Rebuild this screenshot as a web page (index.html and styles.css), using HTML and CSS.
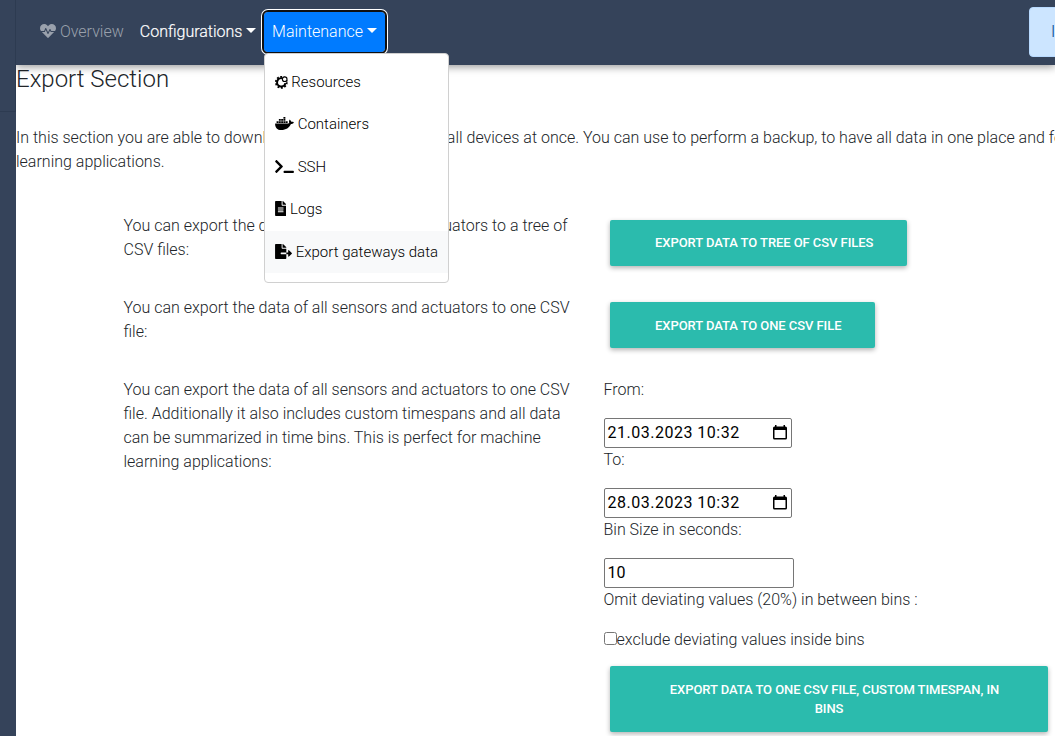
FILE: index.html
```html
<!DOCTYPE html>
<html lang="en">
<head>
<meta charset="utf-8">
<title>Export Section</title>
<link rel="stylesheet" href="styles.css">
</head>
<body>
<div class="app">
  <aside class="sidebar"><div class="sidebar-head"></div></aside>
  <div class="page">
    <nav class="navbar">
      <a class="nav-link muted"><svg class="icon" width="16" height="16" viewBox="0 0 512 512"><path d="M320.2 243.8l-49.7 99.4c-6 12.1-23.4 11.7-28.9-.6l-56.9-126.3-30 71.7H60.6l182.5 186.5c7.1 7.3 18.6 7.3 25.7 0L451.4 288H342.3l-22.1-44.2zM473.7 73.9l-2.4-2.5c-51.5-52.6-135.8-52.6-187.4 0L256 100l-27.9-28.5c-51.5-52.7-135.9-52.7-187.4 0l-2.4 2.4C-10.4 123.7-12.5 203 31 256h102.4l35.9-86.2c5.4-12.9 23.6-13.2 29.4-.4l58.2 129.3 49-97.9c5.9-11.8 22.7-11.8 28.6 0l27.6 55.2H481c43.5-53 41.4-132.3-7.3-182.1z"/></svg> Overview</a>
      <a class="nav-link caret">Configurations</a>
      <div class="dropdown">
        <a class="nav-link caret active">Maintenance</a>
        <div class="menu">
          <a class="item"><svg class="icon gear" width="13" height="14" viewBox="0 0 13 14"><circle class="gear-teeth" cx="6.3" cy="7.3" r="5.5"/><path class="gear-ring" d="M7 3.200a4.200 4.200 0 1 0 3.400 4.900"/><circle class="gear-gap" cx="9.600" cy="4.300" r="2.500"/><circle class="gear-small" cx="9.700" cy="4.200" r="2.300"/></svg> Resources</a>
          <a class="item"><svg class="icon" width="19" height="15" viewBox="0 0 640 512"><path d="M349.9 236.3h-66.1v-59.4h66.1v59.4zm0-204.3h-66.1v60.7h66.1V32zm78.2 144.8H362v59.4h66.1v-59.4zm-156.3-72.1h-66.1v60.1h66.1v-60.1zm78.1 0h-66.1v60.1h66.1v-60.1zm276.8 100c-14.4-9.7-47.6-13.2-73.1-8.4-3.3-24-16.7-44.9-41.1-63.7l-14-9.3-9.3 14c-18.4 27.8-23.4 73.6-3.7 103.8-8.7 4.7-25.8 11.1-48.4 10.7H2.4c-8.7 50.8 5.8 116.8 44 162.1 37.1 43.9 92.7 66.2 165.4 66.2 157.4 0 273.9-72.5 328.4-204.2 21.4.4 67.6.1 91.3-45.2 1.5-2.5 6.6-13.2 8.5-17.1l-13.3-8.9zm-511.1-27.9h-66v59.4h66.1v-59.4zm78.1 0h-66.1v59.4h66.1v-59.4zm78.1 0h-66.1v59.4h66.1v-59.4zm-78.1-72.1h-66.1v60.1h66.1v-60.1z"/></svg> Containers</a>
          <a class="item"><svg class="icon" width="19" height="15" viewBox="0 0 640 512"><path d="M257.981 272.971L63.638 467.314c-9.373 9.373-24.569 9.373-33.941 0L7.029 444.647c-9.357-9.357-9.375-24.522-.04-33.901L161.011 256 6.99 101.255c-9.335-9.379-9.317-24.544.04-33.901l22.667-22.667c9.373-9.373 24.569-9.373 33.941 0L257.981 239.03c9.373 9.372 9.373 24.568 0 33.941zM640 456v-32c0-13.255-10.745-24-24-24H312c-13.255 0-24 10.745-24 24v32c0 13.255 10.745 24 24 24h304c13.255 0 24-10.745 24-24z"/></svg> SSH</a>
          <a class="item"><svg class="icon" width="11.4" height="15" viewBox="0 0 384 512"><path d="M224 136V0H24C10.7 0 0 10.7 0 24v464c0 13.3 10.7 24 24 24h336c13.3 0 24-10.7 24-24V160H248c-13.2 0-24-10.8-24-24zm64 236c0 6.6-5.4 12-12 12H108c-6.6 0-12-5.4-12-12v-8c0-6.6 5.4-12 12-12h168c6.6 0 12 5.4 12 12v8zm0-64c0 6.6-5.4 12-12 12H108c-6.6 0-12-5.4-12-12v-8c0-6.6 5.4-12 12-12h168c6.6 0 12 5.4 12 12v8zm0-72v8c0 6.6-5.4 12-12 12H108c-6.6 0-12-5.4-12-12v-8c0-6.6 5.4-12 12-12h168c6.6 0 12 5.4 12 12zm96-114.1v6.1H256V0h6.1c6.4 0 12.5 2.5 17 7l97.9 98c4.5 4.5 7 10.6 7 16.9z"/></svg> Logs</a>
          <a class="item current"><svg class="icon" width="17" height="15" viewBox="0 0 576 512"><path d="M384 121.9c0-6.3-2.5-12.4-7-16.9L279.1 7c-4.5-4.5-10.6-7-17-7H256v128h128zM571 308l-95.7-96.4c-10.1-10.1-27.4-3-27.4 11.3V288h-64v64h64v65.2c0 14.3 17.3 21.4 27.4 11.3L571 332c6.6-6.6 6.6-17.4 0-24zm-379 28v-32c0-8.8 7.2-16 16-16h176V160H248c-13.2 0-24-10.8-24-24V0H24C10.7 0 0 10.7 0 24v464c0 13.3 10.7 24 24 24h336c13.3 0 24-10.7 24-24V352H208c-8.8 0-16-7.2-16-16z"/></svg> Export gateways data</a>
        </div>
      </div>
      <div class="alert">Info</div>
    </nav>
    <main class="content">
      <h1 class="title">Export Section</h1>
      <p class="intro">In this section you are able to download the gateways data of all devices at once. You can use to perform a backup, to have all data in one place and for machine<br>learning applications.</p>
      <section class="exports">
        <p class="desc">You can export the data of all sensors and actuators to a tree of CSV files:</p>
        <div class="action"><button class="btn tree">Export data to tree of CSV files</button></div>
        <p class="desc">You can export the data of all sensors and actuators to one CSV file:</p>
        <div class="action"><button class="btn">Export data to one CSV file</button></div>
        <p class="desc">You can export the data of all sensors and actuators to one CSV file. Additionally it also includes custom timespans and all data can be summarized in time bins. This is perfect for machine learning applications:</p>
        <form class="form">
          <p class="label">From:</p>
          <div class="field date"><span class="value">21.03.2023 10:32</span><svg class="calendar" width="14" height="15" viewBox="0 0 14 15"><path d="M2 0h1.5v1.5h7V0H12v1.5h.5Q14 1.5 14 3v10q0 1.500-1.500 1.500h-11Q0 14.500 0 13V3q0-1.500 1.500-1.500H2zM1.500 5v8h11V5z" fill-rule="evenodd"/></svg></div>
          <p class="label">To:</p>
          <div class="field date"><span class="value">28.03.2023 10:32</span><svg class="calendar" width="14" height="15" viewBox="0 0 14 15"><path d="M2 0h1.5v1.5h7V0H12v1.5h.5Q14 1.5 14 3v10q0 1.500-1.500 1.500h-11Q0 14.500 0 13V3q0-1.500 1.500-1.500H2zM1.500 5v8h11V5z" fill-rule="evenodd"/></svg></div>
          <p class="label">Bin Size in seconds:</p>
          <input class="field number" type="text" value="10">
          <p class="label">Omit deviating values (20%) in between bins :</p>
          <label class="check"><input class="box" type="checkbox">exclude deviating values inside bins</label>
          <button class="btn wide" type="button">Export data to one CSV file, custom timespan, in bins</button>
        </form>
      </section>
    </main>
  </div>
</div>
</body>
</html>
```
FILE: styles.css
```css
* { box-sizing: border-box; }
body { margin: 0; background: #fff; color: #212529; font: 300 16px/24px Roboto, sans-serif; overflow: hidden; }
p, h1 { margin: 0; }
.app { display: flex; width: 1055px; height: 736px; overflow: hidden; }
.sidebar { position: relative; z-index: 3; flex: 0 0 16px; background: #35435a; }
.sidebar-head { height: 112px; border-right: 1px solid #2d3b51; border-bottom: 1px solid #2d3b51; }
.page { flex: 1; min-width: 0; }
.navbar { position: relative; z-index: 2; display: flex; align-items: center; height: 65px; padding: 0 0 2px 16px; background: #35435a; box-shadow: 0 2px 8px rgba(0,0,0,.4); }
.nav-link { display: block; padding: 8px; color: #fff; white-space: nowrap; }
.nav-link.muted { color: #9aa1ac; }
.nav-link.caret { -webkit-text-stroke: .2px #fff; }
.nav-link.caret.active { padding-left: 7.6px; padding-right: 8.4px; -webkit-text-stroke: 0; }
.icon { fill: currentColor; vertical-align: -2px; }
.gear { margin-right: -.4px; }
.caret::after { content: ""; display: inline-block; margin-left: 4px; vertical-align: 4px; border: 5px solid transparent; border-top-color: #fff; border-bottom: 0; }
.dropdown { position: relative; }
.active { background: #007bff; border-radius: 4px; outline: 2px solid #101010; box-shadow: 0 0 0 3px #fff; }
.menu { position: absolute; top: 41px; left: 0; width: 185px; height: 230px; padding: 7.4px 0; background: #fff; border: 1px solid #d0d0d0; border-radius: 4px; }
.item { display: block; height: 42.5px; padding: 9px 9.6px; color: #000; font-size: 15px; white-space: nowrap; }
.current { background: #f8f9fa; }
.gear-teeth { fill: none; stroke: #000; stroke-width: 1.8; stroke-dasharray: 1.9 1.556; }
.gear-ring { fill: none; stroke: #000; stroke-width: 2; }
.gear-gap { fill: #fff; }
.gear-small { fill: none; stroke: #000; stroke-width: 1.1; }
.alert { flex: none; width: 110px; height: 50px; margin: 0 -84px 0 auto; padding: 12px 21px; color: #004085; background: #cce5ff; border: 1px solid #b8daff; border-radius: 4px; }
.title { font-size: 24px; line-height: 29px; font-weight: 300; }
.intro { margin-top: 32px; white-space: nowrap; }
.exports { display: grid; grid-template-columns: 450px 452px; column-gap: 30px; row-gap: 34px; margin: 40px 0 0 107.5px; }
.desc { min-height: 48px; }
.action { height: 48px; padding: 6px 0 0 6.5px; }
.btn { height: 46px; padding: 0 34px; border: 0; border-radius: 2px; color: #fff; background: #2bbbad; box-shadow: 0 2px 5px rgba(0,0,0,.3); font: 500 13px/19px Roboto, sans-serif; letter-spacing: -.07px; text-indent: 11px; text-transform: uppercase; }
.tree { padding-bottom: 2px; }
.form { display: flex; flex-direction: column; align-items: flex-start; }
.label { margin-bottom: 16px; }
.field { height: 30px; border: 1px solid #767676; border-radius: 2px; background: #fff; color: #000; font: 400 16px/28px Roboto, sans-serif; }
.date { display: flex; align-items: center; justify-content: space-between; width: 188px; padding: 0 4px 0 3px; }
.value { letter-spacing: .5px; }
.calendar { margin-top: -1px; }
.number { width: 190px; padding: 0 3px 1px; }
.check { display: flex; align-items: center; height: 24px; margin-bottom: 14px; }
.box { width: 13px; height: 13px; margin: -3px 0 0; }
.wide { width: 438px; height: 66px; margin-left: 6.5px; padding: 0 40px; }
```
